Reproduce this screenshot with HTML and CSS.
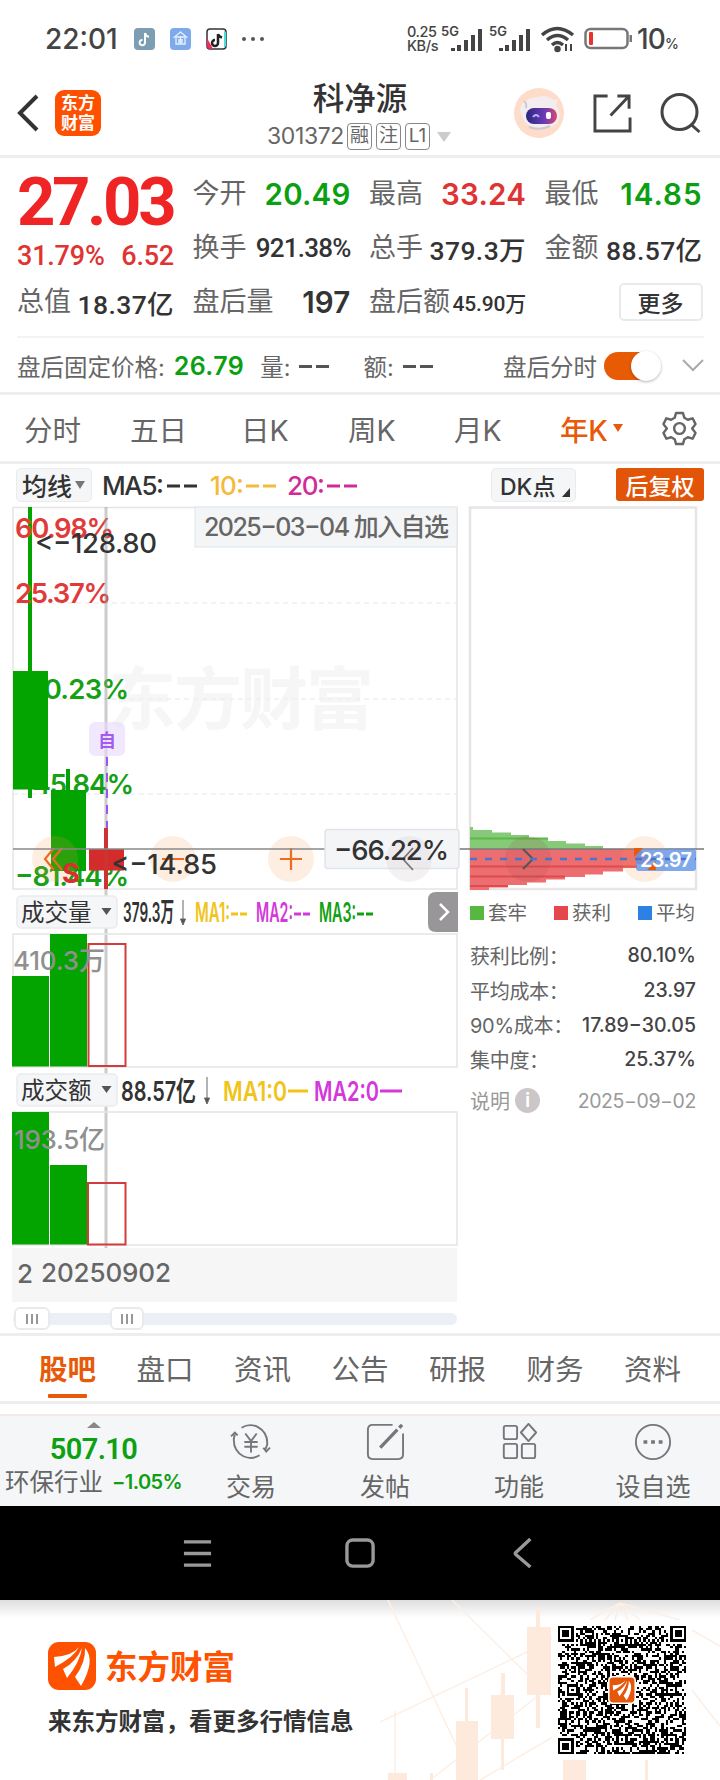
FILE: index.html
```html
<!DOCTYPE html>
<html lang="zh-CN">
<head>
  <meta charset="UTF-8">
  <meta name="viewport" content="width=device-width, initial-scale=1.0">
  <title>科净源 301372</title>
  <link rel="stylesheet" href="styles.css">
</head>
<body>
  <div class="status-bar">
    <span class="clock">22:01</span>
    <div class="app-icons">
      <svg class="app-icon" viewBox="0 0 22 22"><rect width="21" height="22" rx="4" fill="#7c9db2"/><path d="M11 5v9.5a2.7 2.7 0 1 1-2.5-2.6M11 5c.5 2.5 2 3.500 4 3.700" fill="none" stroke="#fff" stroke-width="2"/></svg>
      <svg class="app-icon" viewBox="0 0 22 22"><rect width="21" height="22" rx="4" fill="#7eaaea"/><path d="M10.500 4l6 5h-12zM6 10v6h9v-6M8 12h5M8 14h5M10.500 8v8" fill="none" stroke="#e8f2ff" stroke-width="1.300"/></svg>
      <svg class="app-icon" viewBox="0 0 22 22"><rect x="1" y="1" width="19" height="20" rx="3" fill="#fff" stroke="#333" stroke-width="1.500"/><path d="M1 10v8q0 3 3 3h3z" fill="#f3295b"/><path d="M20 4v14l-2 2V3z" fill="#45e0df"/><path d="M12 6v9a3 3 0 1 1-3-3M12 6c.5 2.500 2 3 4 3.500" fill="none" stroke="#222" stroke-width="2.500"/></svg>
      <span class="more-dots"><i></i><i></i><i></i></span>
    </div>
    <div class="net-speed"><span>0.25</span><span>KB/s</span></div>
    <svg class="signal" viewBox="0 0 48 30"><text x="0" y="12">5G</text><path d="M12 24v3M18 21v6M25 16v11M32 11v16M39 5v22" /></svg>
    <svg class="signal" viewBox="0 0 48 30"><text x="0" y="12">5G</text><path d="M12 24v3M18 21v6M25 16v11M32 11v16M39 5v22" /></svg>
    <svg class="wifi" viewBox="0 0 36 28" fill="none" stroke="#444" stroke-width="3.500"><path d="M2 10q15-13 31 0M7 15q10.500-9 21 0M12 20q5.500-5 11 0"/><circle cx="17.500" cy="24" r="1.500" fill="#444"/><path d="M26 26v-7M31 19v7" stroke-width="2"/></svg>
    <svg class="battery" viewBox="0 0 50 24"><rect x="1.500" y="2" width="42" height="19" rx="5" fill="#fff" stroke="#777" stroke-width="2.500"/><rect x="5" y="5" width="4" height="13" rx="1" fill="#e8332a"/><rect x="45.500" y="8" width="2.500" height="7" fill="#777"/></svg>
    <span class="battery-level">10<small>%</small></span>
  </div>

  <div class="header">
    <div class="header-left">
      <svg class="back" viewBox="0 0 24 38"><path d="M21 2L4 19l17 17" fill="none" stroke="#333" stroke-width="4"/></svg>
      <div class="brand">东方<br>财富</div>
    </div>
    <div class="header-title">
      <h1>科净源</h1>
      <div class="code"><span>301372</span><b>融</b><b>注</b><b>L1</b><i></i></div>
    </div>
    <div class="header-right">
      <svg class="robot" viewBox="0 0 50 50"><defs><linearGradient id="visor"><stop offset="0" stop-color="#2a2680"/><stop offset=".6" stop-color="#6c3bb5"/><stop offset="1" stop-color="#d94770"/></linearGradient></defs><circle cx="25" cy="25" r="25" fill="#fddcc9"/><path d="M7 26C4 15 13 10 24 9l5-1q6 0 11 4l4-1-2 6q6 8 2 17-5 6-15 7-17 1-22-15z" fill="#f3edf0"/><path d="M10 13q3 2 2 7M15 39q11 4 21-1" fill="none" stroke="#cfc7d2" stroke-width="2"/><rect x="12" y="20" width="31" height="16" rx="8" fill="url(#visor)"/><path d="M19 29q3-4 6 0" fill="none" stroke="#b9b1ff" stroke-width="2"/><rect x="32" y="24" width="5" height="7" rx="2" fill="#fff"/></svg>
      <svg class="share" viewBox="0 0 40 40"><path d="M15 2H2v36h36V24M25 2h12v13M36 3L18 22" fill="none" stroke="#444" stroke-width="3"/></svg>
      <svg class="search" viewBox="0 0 40 42"><circle cx="19" cy="20" r="17.500" fill="none" stroke="#444" stroke-width="3"/><path d="M30 32l9 8" stroke="#444" stroke-width="3"/></svg>
    </div>
  </div>

  <div class="quote">
    <div class="quote-grid">
      <div class="cell price">27.03</div>
      <div class="cell"><label>今开</label><span class="green big">20.49</span></div>
      <div class="cell"><label>最高</label><span class="red big">33.24</span></div>
      <div class="cell"><label>最低</label><span class="green big wide">14.85</span></div>
      <div class="cell change"><span>31.79%</span><span>6.52</span></div>
      <div class="cell"><label>换手</label><span class="mid tight">921.38%</span></div>
      <div class="cell"><label>总手</label><span class="mid">379.3万</span></div>
      <div class="cell"><label>金额</label><span class="mid">88.57亿</span></div>
      <div class="cell"><label>总值</label><span class="mid">18.37亿</span></div>
      <div class="cell"><label>盘后量</label><span class="big">197</span></div>
      <div class="cell"><label>盘后额</label><span class="small">45.90万</span></div>
      <div class="cell end"><button class="more-btn">更多</button></div>
    </div>
    <div class="after-hours">
      <span>盘后固定价格:</span><b class="green">26.79</b>
      <span>量:</span><b class="dashes"><i></i><i></i></b>
      <span>额:</span><b class="dashes"><i></i><i></i></b>
      <span class="after-label">盘后分时</span>
      <span class="toggle"></span>
      <svg class="chevron" viewBox="0 0 22 14"><path d="M1 2l10 10L21 2" fill="none" stroke="#aaa" stroke-width="2"/></svg>
    </div>
  </div>

  <div class="period-tabs">
    <span>分时</span><span>五日</span><span>日K</span><span>周K</span><span>月K</span>
    <span class="active">年K<i></i></span>
    <svg class="gear" viewBox="0 0 36 36" fill="none" stroke="#666" stroke-width="2.500"><path d="M14.500 2h7l1.500 5 3.500 2 5-1.500 3 6-3.500 4.500 3.500 4.500-3 6-5-1.500-3.500 2-1.500 5h-7l-1.500-5-3.500-2-5 1.500-3-6L5 18l-3.500-4.500 3-6 5 1.500 3.500-2z" stroke-linejoin="round"/><circle cx="18" cy="18" r="5.500"/></svg>
  </div>

  <div class="ma-bar">
    <button class="grey-btn">均线<i></i></button>
    <svg class="ma-values" viewBox="0 0 270 34">
      <text x="2" y="27" textLength="62" fill="#333">MA5:</text><path d="M67 18h13M84 18h13" stroke="#333"/>
      <text x="110" y="27" textLength="34" fill="#f5b93c">10:</text><path d="M146 18h13M163 18h13" stroke="#f5b93c"/>
      <text x="187" y="27" textLength="38" fill="#d02c98">20:</text><path d="M227 18h13M244 18h13" stroke="#d02c98"/>
    </svg>
    <button class="grey-btn dk">DK点<i></i></button>
    <button class="adjust-btn">后复权</button>
  </div>

  <div class="chart-area">
    <svg class="chart" viewBox="0 506 460 828">
      <!-- k-line panel -->
      <text class="watermark" x="108" y="724" textLength="266">东方财富</text>
      <path class="grid" d="M13 603H457M13 699H457M13 794H457"/>
      <rect class="frame" x="13" y="507.500" width="444" height="381.500"/>
      <g class="tick green-text">
        <text x="15" y="699" textLength="114">−10.23%</text>
        <text x="15" y="794" textLength="119">−45.84%</text>
        <text x="15" y="886" textLength="114">−81.44%</text>
      </g>
      <g fill="#03a300">
        <rect x="28" y="507" width="4" height="291"/><rect x="13" y="671" width="35" height="118.500"/>
        <rect x="66" y="769" width="4" height="22"/><rect x="51" y="790" width="35" height="81"/>
      </g>
      <g class="tick red-text">
        <text x="15" y="538" textLength="99">60.98%</text>
        <text x="15" y="603" textLength="96">25.37%</text>
      </g>
      <path d="M106 507V1250" stroke="#999" stroke-opacity=".5" stroke-width="3"/>
      <path d="M107 757V828" stroke="#9a57ee" stroke-width="2" stroke-dasharray="9 7"/>
      <rect x="89" y="849" width="35" height="21.500" fill="#d42b2b"/><path d="M106 828V889" stroke="#c33" stroke-width="4"/>
      <rect x="89" y="722" width="36" height="34" rx="6" fill="#ead9fc" fill-opacity=".6"/>
      <text x="98" y="747" class="self">自</text>
      <text x="35" y="553" class="tick dark" textLength="122">&lt;−128.80</text>
      <rect x="195" y="507" width="262" height="40" fill="#f4f5f7" stroke="#dde5ea"/>
      <text x="204" y="536" class="tick note" textLength="245">2025−03−04 加入自选</text>
      <circle cx="55" cy="859" r="23" class="tool"/><circle cx="173" cy="859" r="23" class="tool"/><circle cx="291" cy="859" r="23" class="tool"/>
      <path d="M54 848L45 859l9 11M62 848l-9 11 9 11M162 859h22M280 859h22M291 848v22" class="tool-line"/>
      <text x="62" y="883" class="sell">S</text>
      <text x="111" y="874" class="tick dark" textLength="106">&lt;−14.85</text>
      <path d="M13 849H460" stroke="#888" stroke-width="1.500"/>
      <rect x="325" y="829.500" width="134" height="39" rx="3" fill="#f4f5f7" stroke="#dfe5ea" stroke-width="1.500"/>
      <circle cx="409" cy="859" r="23" fill="#d9cfd3" fill-opacity=".3"/>
      <path d="M413 848l-10 11 10 11" fill="none" stroke="#777" stroke-width="1.800"/>
      <text x="334" y="860" class="tick dark" textLength="115">−66.22%</text>

      <!-- volume panel -->
      <rect class="btn" x="17" y="896" width="100" height="32" rx="4"/>
      <text x="21" y="921" class="label">成交量</text>
      <path d="M101.500 908h10l-5 7z" fill="#555"/>
      <g class="legend">
        <text x="123" y="922" textLength="51" lengthAdjust="spacingAndGlyphs" fill="#333">379.3万</text>
        <path d="M183 900v24M180.500 919l2.500 6 2.500-6z" stroke="#666" fill="#444"/>
        <g fill="#f0c419"><text x="195" y="922" textLength="35" lengthAdjust="spacingAndGlyphs">MA1:</text><path class="dash" d="M231 914h7M240 914h7" stroke="#f0c419"/></g>
        <g fill="#d338db"><text x="256" y="922" textLength="37" lengthAdjust="spacingAndGlyphs">MA2:</text><path class="dash" d="M294 914h7M303 914h7" stroke="#d338db"/></g>
        <g fill="#12a012"><text x="319" y="922" textLength="37" lengthAdjust="spacingAndGlyphs">MA3:</text><path class="dash" d="M357 914h7M366 914h7" stroke="#12a012"/></g>
      </g>
      <path d="M458 892v40h-22q-8 0-8-8v-24q0-8 8-8z" fill="#989698"/><path d="M440 904l8 8-8 8" fill="none" stroke="#fff" stroke-width="2.500"/>
      <rect class="frame" x="13" y="934" width="444" height="133"/>
      <path d="M12 976h37v90.500H12zM50 934h37v132.500H50z" fill="#03a300"/>
      <rect x="88.500" y="944" width="37" height="122" class="hollow"/>
      <text x="13" y="970" class="tick axis" textLength="92">410.3万</text>

      <!-- turnover panel -->
      <rect class="btn" x="17" y="1074" width="100" height="32" rx="4"/>
      <text x="21" y="1099" class="label">成交额</text>
      <path d="M101.500 1086h10l-5 7z" fill="#555"/>
      <g class="legend">
        <text x="121" y="1101" textLength="75" lengthAdjust="spacingAndGlyphs" fill="#333">88.57亿</text>
        <path d="M207 1077v26M204.500 1098l2.500 6 2.500-6z" stroke="#666" fill="#444"/>
        <g fill="#f0c419"><text x="223" y="1101" textLength="64" lengthAdjust="spacingAndGlyphs">MA1:0</text><path class="dash" d="M288 1091h20" stroke="#f0c419"/></g>
        <g fill="#d338db"><text x="314" y="1101" textLength="65" lengthAdjust="spacingAndGlyphs">MA2:0</text><path class="dash" d="M380 1091h22" stroke="#d338db"/></g>
      </g>
      <rect class="frame" x="13" y="1112" width="444" height="133"/>
      <path d="M12 1112h37v132.500H12zM50 1165h37v79.500H50z" fill="#03a300"/>
      <rect x="88" y="1183" width="37.500" height="61.500" class="hollow"/>
      <text x="14" y="1149" class="tick axis" textLength="91">193.5亿</text>

      <!-- date axis and range slider -->
      <rect x="12" y="1248" width="445" height="54" fill="#f6f6f7"/>
      <text x="17" y="1283" class="tick date">2</text>
      <text x="41" y="1282" class="tick date" textLength="130">20250902</text>
      <rect x="13" y="1313" width="444" height="12" rx="6" fill="#ecf0f6"/>
      <g class="thumb"><rect x="15" y="1308" width="34" height="21" rx="5"/><rect x="111" y="1308" width="32" height="21" rx="5"/></g>
      <path d="M27 1314v10M32 1314v10M37 1314v10M122 1314v10M127 1314v10M132 1314v10" stroke="#777" stroke-width="1.500"/>
    </svg>

    <div class="chips">
      <svg class="chips-chart" viewBox="460 506 244 386">
        <rect class="frame wide" x="470" y="507.500" width="226" height="381.500"/>
        <path d="M470 827h3v3h19v2.500h19v2.500h18v3h19v3h18v2.500h19v2.500h18v3H470z" fill="#86c978"/>
        <path d="M470 838.500h78" stroke="#5bb945" stroke-width="2"/>
        <path d="M470 849h168l18 10-10 5h-9v4h-14v3.500h-20v3h-18v2.500h-20v2.500h-19v3h-19v2.500h-19v2.500h-19v2.500h-19z" fill="#ed6e70"/>
        <path d="M470 866.500h167M470 876.500h95M470 886h38" stroke="#e04a4c" stroke-width="2"/>
        <circle cx="528" cy="859" r="23" fill="#a3454a" fill-opacity=".15"/>
        <path d="M460 849H704" stroke="#777" stroke-width="1.500"/>
        <circle cx="645" cy="859" r="23" class="tool"/>
        <path d="M523 849l10 10-10 10" fill="none" stroke="#555" stroke-width="2"/>
        <rect x="636" y="849" width="60" height="22" rx="3" fill="#5f93e6" fill-opacity=".8"/>
        <path d="M470 859H696" stroke="#4b73c9" stroke-width="2.500" stroke-dasharray="7 8"/>
        <path d="M634 848h9l-9 9zM656 870h-9l9-9z" fill="#e55a0b"/>
        <text x="640" y="867" textLength="52" class="avg">23.97</text>
      </svg>
      <div class="chips-legend">
        <span><i class="bg-green"></i>套牢</span><span><i class="bg-red"></i>获利</span><span><i class="bg-blue"></i>平均</span>
      </div>
      <div class="chips-row"><span>获利比例：</span><b>80.10%</b></div>
      <div class="chips-row"><span>平均成本：</span><b>23.97</b></div>
      <div class="chips-row"><span>90%成本：</span><b>17.89−30.05</b></div>
      <div class="chips-row"><span>集中度：</span><b>25.37%</b></div>
      <div class="chips-note"><span>说明</span><i>i</i><em>2025−09−02</em></div>
    </div>
  </div>

  <div class="info-tabs">
    <span class="active">股吧</span><span>盘口</span><span>资讯</span><span>公告</span><span>研报</span><span>财务</span><span>资料</span>
  </div>

  <div class="bottom-bar">
    <div class="industry">
      <i></i>
      <strong>507.10</strong>
      <div><span>环保行业</span><b>−1.05%</b></div>
    </div>
    <div class="action"><svg viewBox="0 0 44 40"><path d="M12 5q8-5 17-1 11 6 10 19l-2 5M31 34q-8 5-17 1Q3 29 4 16l1-4M1 14l4-4 3 3M35 26l3 4 4-4" /><path d="M16 11l6 8 6-8M15 20h14M15 25h14M22 19v12" /></svg>交易</div>
    <div class="action"><svg viewBox="0 0 44 40"><path d="M30 2H9q-5 0-5 5v26q0 5 5 5h27q5 0 5-5V11"/><path d="M17 26L35 7M37 5l3-3" stroke-width="3.500"/></svg>发帖</div>
    <div class="action"><svg viewBox="0 0 44 40"><rect x="6" y="3" width="14" height="14" rx="2"/><rect x="6" y="22" width="14" height="15" rx="2"/><rect x="25" y="22" width="14" height="15" rx="2"/><path d="M32 1l8 9-8 9-8-9z" stroke-linejoin="round"/></svg>功能</div>
    <div class="action"><svg viewBox="0 0 44 40"><circle cx="22" cy="20" r="18"/><path d="M12 20h4M20 20h4M28 20h4" stroke-width="3.500"/></svg>设自选</div>
  </div>

  <div class="system-nav">
    <svg viewBox="0 0 30 32"><path d="M1 4h28M1 16h28M1 28h28"/></svg>
    <svg viewBox="0 0 32 32"><rect x="2" y="2" width="27" height="27" rx="6"/></svg>
    <svg viewBox="0 0 30 32"><path d="M20 1L5 15q-1 1 0 2l15 13"/></svg>
  </div>

  <div class="footer">
    <svg class="footer-bg" viewBox="380 1600 340 180">
      <g fill="none" stroke="#fdefe4" stroke-width="1.500">
        <path d="M388 1600l82 175M452 1600l76 75M380 1722l160-76 20-14M430 1780l118-92M480 1780l110-65M590 1620l30-17 60 17M620 1603l-15 17M620 1603l-5 17M620 1603l8 17M620 1603l20 17M692 1630l28 16M692 1690l28 36M395 1711v69"/>
      </g>
      <g fill="#feeadd">
        <path d="M536 1608h4v19h11v68h-11v33h-4v-33h-9v-68h9zM501 1673h4v22h9v44h-10v31h-3v-31h-10v-44h10zM465 1688h3v33h10v59h-22v-59h9zM388 1773h19v7h-19zM430 1773h3v7h-3zM563 1760h23v20h-23zM645 1760h3v20h-3z"/>
      </g>
    </svg>
    <div class="footer-brand">
      <div class="footer-logo">
        <svg class="mark" viewBox="0 0 48 48"><rect width="48" height="48" rx="11" fill="#ff5200"/><g fill="#fff"><path d="M31 5Q26 15 7 25l-1-10q18-1 25-10z"/><path d="M34 6q-2 14-15 30l-4-9Q28 20 34 6z"/><path d="M37 6q11 12-4 38l-6-9q11-15 10-29z"/></g></svg>
        <span>东方财富</span>
      </div>
      <p>来东方财富，看更多行情信息</p>
    </div>
    <div class="qr">
      <svg id="qr-code" viewBox="0 0 57 57" shape-rendering="crispEdges"></svg>
      <svg class="qr-mark" viewBox="-3 -3 54 54"><rect x="-3" y="-3" width="54" height="54" rx="8" fill="#fff"/><rect width="48" height="48" rx="7" fill="#e5570a"/><g fill="#fff"><path d="M31 5Q26 15 7 25l-1-10q18-1 25-10z"/><path d="M34 6q-2 14-15 30l-4-9Q28 20 34 6z"/><path d="M37 6q11 12-4 38l-6-9q11-15 10-29z"/></g></svg>
    </div>
  </div>
  <script src="script.js"></script>
</body>
</html>
```
FILE: styles.css
```css
* {
  box-sizing: border-box;
  margin: 0;
  padding: 0;
}
body {
  width: 720px;
  height: 1780px;
  overflow: hidden;
  background: #fff;
  color: #333;
  font-family: Inter, "Noto Sans CJK SC", sans-serif;
}
i, em { font-style: normal; }
button { font-family: inherit; border: none; }
svg { display: block; flex: none; }
.green { color: #0b9f12; }
.red { color: #e03333; }

/* status bar */
.status-bar {
  height: 76px;
  padding: 2px 38px 0 45px;
  display: flex;
  align-items: center;
  color: #444;
}
.clock {
  width: 89px;
  font-size: 28px;
  font-weight: 500;
}
.app-icons {
  display: flex;
  align-items: center;
  gap: 14px;
  width: 273px;
}
.app-icon { width: 22px; height: 22px; }
.more-dots { display: flex; gap: 5px; }
.more-dots i { width: 4px; height: 4px; border-radius: 50%; background: #555; }
.net-speed {
  width: 34px;
  display: flex;
  flex-direction: column;
  font-size: 14.5px;
  font-weight: 500;
  line-height: 14px;
  letter-spacing: -0.4px;
}
.signal { width: 48px; height: 30px; }
.signal text { font-size: 13px; font-weight: 600; fill: #444; }
.signal path { fill: none; stroke: #444; stroke-width: 4; }
.wifi { width: 36px; height: 28px; margin-left: 3px; }
.battery { width: 50px; height: 24px; margin-left: 8px; }
.battery-level {
  margin-left: 3px;
  font-size: 28px;
  font-weight: 500;
  letter-spacing: -0.8px;
  white-space: nowrap;
}
.battery-level small { font-size: 14px; }

/* header */
.header {
  height: 82px;
  padding: 0 19px 0 16px;
  display: grid;
  grid-template-columns: 205px 1fr 205px;
  border-bottom: 3px solid #eceeef;
}
.header-left, .header-right { display: flex; align-items: center; }
.header-left { gap: 15px; padding-bottom: 5px; }
.back { width: 24px; height: 38px; }
.brand {
  width: 46px;
  height: 46px;
  border-radius: 9px;
  background: #ff5000;
  color: #fff;
  font: 700 17px/20px "Noto Sans CJK SC", sans-serif;
  text-align: center;
  padding-top: 2px;
}
.header-title {
  display: flex;
  flex-direction: column;
  align-items: center;
}
.header-title h1 {
  margin-left: 3px;
  font-size: 31.5px;
  line-height: 45px;
  font-weight: 500;
}
.code {
  display: flex;
  align-items: center;
  gap: 4px;
  margin-left: 1px;
  font-size: 23px;
  line-height: 31px;
  color: #666;
}
.code span { letter-spacing: -0.4px; margin-right: -1px; }
.code b {
  width: 25px;
  height: 27px;
  border: 1.5px solid #888;
  border-radius: 4px;
  font-size: 19px;
  line-height: 23px;
  font-weight: 400;
  text-align: center;
}
.code i {
  margin-left: 3px;
  border: 7px solid transparent;
  border-top: 10px solid #ccc;
  border-bottom: 0;
}
.header-right { justify-content: flex-end; gap: 28px; padding-bottom: 5px; }
.robot { width: 50px; height: 50px; margin-right: 1px; }
.share { width: 39px; height: 39px; }
.search { width: 41px; height: 42px; }

/* quote */
.quote {
  height: 237px;
  padding: 8px 16px 0 17px;
  border-bottom: 3px solid #eceeef;
}
.quote-grid {
  display: grid;
  grid-template-columns: 157px 158px 157px 158px;
  grid-template-rows: 55px 54px 54px;
  column-gap: 18.5px;
  height: 172px;
  border-bottom: 2px solid #f2f3f4;
}
.cell {
  display: flex;
  align-items: center;
  justify-content: space-between;
  white-space: nowrap;
}
.cell label { font-size: 27px; line-height: 34px; color: #666; }
.cell span { font-weight: 500; }
.cell .big { font-size: 29.5px; font-weight: 600; letter-spacing: 0.2px; }
.cell .big.wide { letter-spacing: 1px; }
.cell .mid { font-family: Roboto, "Noto Sans CJK SC", sans-serif; font-size: 26.5px; letter-spacing: 0.4px; }
.cell .mid.tight { font-size: 26px; letter-spacing: -0.8px; }
.cell .small { font-family: Roboto, "Noto Sans CJK SC", sans-serif; font-size: 21px; letter-spacing: -0.2px; }
.cell.price {
  font-family: Roboto, sans-serif;
  font-size: 67px;
  font-weight: 700;
  letter-spacing: -3.4px;
  color: #ef2525;
  padding-top: 17px;
}
.cell.change {
  color: #e03333;
  font-family: Roboto, sans-serif;
  font-size: 27px;
  padding-top: 16px;
  letter-spacing: -0.2px;
}
.cell.end { justify-content: flex-end; }
.more-btn {
  width: 84px;
  height: 38px;
  border: 2px solid #e8ebec;
  border-radius: 5px;
  background: #fff;
  color: #333;
  font-size: 23px;
  font-weight: 500;
}
.after-hours {
  height: 55px;
  display: flex;
  align-items: center;
  font-size: 23.5px;
  color: #666;
  white-space: nowrap;
}
.after-hours .green { font-size: 25px; font-weight: 600; margin: 0 16px 0 9px; letter-spacing: 0.4px; }
.dashes { display: inline-flex; gap: 4px; margin: 2px 34px 0 9px; }
.dashes i { width: 13px; height: 3px; background: #555; }
.after-label { margin-left: auto; }
.toggle {
  width: 56px;
  height: 28px;
  margin: 0 22px 0 7px;
  border-radius: 14px;
  background: #e85b05;
}
.toggle::after {
  content: '';
  display: block;
  width: 30px;
  height: 30px;
  margin: -1px 0 0 27px;
  border-radius: 50%;
  background: #fff;
  box-shadow: 0 1px 3px rgba(0, 0, 0, 0.3);
}
.chevron { width: 22px; height: 14px; margin-top: -2px; }

/* period tabs */
.period-tabs {
  height: 69px;
  padding: 0 23px 0 24px;
  display: grid;
  grid-template-columns: 106px 111px 107px 106px 106px 1fr 35px;
  align-items: center;
  border-bottom: 3px solid #eceeef;
  font-size: 28.5px;
  color: #666;
}
.period-tabs .active {
  display: flex;
  align-items: center;
  color: #e65a0a;
  font-weight: 500;
  letter-spacing: -0.3px;
}
.period-tabs .active i {
  margin-left: 5px;
  border: 5px solid transparent;
  border-top: 8px solid #e65a0a;
  border-bottom: 0;
}
.gear { width: 35px; height: 35px; }

/* moving average bar */
.ma-bar {
  height: 42px;
  padding: 4px 16px 0;
  display: flex;
  align-items: flex-start;
}
.grey-btn {
  display: flex;
  align-items: center;
  width: 76px;
  height: 34px;
  padding-left: 5px;
  background: #f5f6f8;
  border: 1.5px solid #e9ebef;
  border-radius: 5px;
  color: #333;
  font-size: 25px;
  font-weight: 500;
}
.grey-btn i {
  margin-left: 3px;
  border: 5px solid transparent;
  border-top: 8px solid #777;
  border-bottom: 0;
}
.ma-values {
  width: 270px;
  height: 34px;
  margin-left: 8px;
  font-size: 26px;
  font-weight: 500;
}
.ma-values path { stroke-width: 3; }
.grey-btn.dk { width: 85px; padding-left: 8px; margin-left: 121px; font-size: 23px; }
.grey-btn.dk i {
  align-self: flex-end;
  margin: 0 0 4px 7px;
  border: 0;
  border-left: 8px solid transparent;
  border-bottom: 9px solid #333;
}
.adjust-btn {
  width: 88px;
  height: 33px;
  margin-left: auto;
  background: #e25508;
  border-radius: 3px;
  color: #fff;
  font-size: 23px;
  font-weight: 500;
}

/* charts */
.chart-area {
  height: 830px;
  display: flex;
  border-bottom: 3px solid #eceeef;
}
.chart { width: 460px; height: 828px; }
.frame { fill: none; stroke: #e8e3e5; stroke-width: 1.5; }
.frame.wide { stroke-width: 2.5; }
.grid { fill: none; stroke: #efefef; stroke-width: 1.5; stroke-dasharray: 5 4; }
.watermark { font-size: 68px; font-weight: 700; fill: #f6f6f6; }
.tick { font-size: 27.5px; font-weight: 500; }
.green-text { fill: #15a015; font-weight: 600; }
.red-text { fill: #e03b3b; font-weight: 600; }
.dark { fill: #333; }
.note { font-size: 25px; fill: #666; }
.axis { font-size: 26px; font-weight: 500; fill: #909090; }
.date { font-size: 26px; fill: #666; }
.self { font-size: 18px; font-weight: 700; fill: #a45cf0; }
.sell { font-size: 27px; font-weight: 700; fill: #dc2e2e; }
.tool { fill: #fa9b50; fill-opacity: 0.17; }
.tool-line { fill: none; stroke: #ee6b1f; stroke-width: 2.2; }
.btn { fill: #f5f6f8; stroke: #e9ebef; stroke-width: 1.5; }
.label { font-size: 23.5px; fill: #333; }
.legend { font-size: 27px; font-weight: 600; }
.legend .dash { fill: none; stroke-width: 3; }
.hollow { fill: none; stroke: #d23c3c; stroke-width: 2; }
.thumb rect { fill: #fff; stroke: #e8ebee; stroke-width: 2; }

.chips { width: 244px; color: #666; font-size: 20px; }
.chips-chart { width: 244px; height: 386px; }
.avg { font-size: 20px; font-weight: 600; fill: #fff; }
.chips-legend {
  height: 38px;
  margin: 0 9px 0 10px;
  display: flex;
  align-items: center;
  justify-content: space-between;
  font-size: 19.5px;
}
.chips-legend i {
  display: inline-block;
  width: 14px;
  height: 14px;
  margin-right: 4px;
}
.bg-green { background: #55b840; }
.bg-red { background: #e5484b; }
.bg-blue { background: #2d80e4; }
.chips-legend + .chips-row { margin-top: 8px; }
.chips-row {
  height: 34.7px;
  margin: 0 8px 0 10px;
  display: flex;
  align-items: center;
  justify-content: space-between;
  white-space: nowrap;
}
.chips-row span { letter-spacing: -0.3px; }
.chips-row b { color: #444; font-size: 19.5px; font-weight: 500; letter-spacing: 0; }
.chips-note {
  height: 44px;
  margin: 2px 8px 0 10px;
  display: flex;
  align-items: center;
  color: #999;
}
.chips-note i {
  width: 25px;
  height: 25px;
  margin-left: 5px;
  border-radius: 50%;
  background: #cbc6c8;
  color: #fff;
  font-weight: 600;
  line-height: 25px;
  text-align: center;
}
.chips-note em { margin-left: auto; font-size: 19.5px; letter-spacing: -0.4px; }

/* info tabs */
.info-tabs {
  height: 68px;
  padding: 0 39px 0 39px;
  display: flex;
  justify-content: space-between;
  border-bottom: 3px solid #eceeef;
  font-size: 28.5px;
  line-height: 68px;
  color: #666;
}
.info-tabs .active { color: #e65a0a; font-weight: 700; }
.info-tabs .active::after {
  content: '';
  display: block;
  width: 39px;
  height: 4px;
  margin: -10px auto 0;
  border-radius: 1px;
  background: #e65a0a;
}

/* bottom bar */
.bottom-bar {
  height: 92px;
  margin-top: 10px;
  display: flex;
  background: #f5f6f8;
  border-top: 2px solid #f3e9e9;
  color: #666;
}
.industry {
  width: 184px;
  padding-left: 3px;
  display: flex;
  flex-direction: column;
  align-items: center;
  white-space: nowrap;
}
.industry i {
  margin-top: 6px;
  border: 7px solid transparent;
  border-top: 0;
  border-bottom: 6px solid #888;
}
.industry strong {
  margin-top: 4px;
  font-family: Roboto, sans-serif;
  font-size: 29px;
  line-height: 34px;
  font-weight: 600;
  letter-spacing: -0.6px;
  color: #0ca012;
}
.industry div { display: flex; align-items: center; gap: 9px; line-height: 32px; }
.industry span { font-size: 24.5px; }
.industry b { font-size: 20px; font-weight: 600; letter-spacing: -0.6px; color: #0ca012; }
.action {
  width: 134px;
  display: flex;
  flex-direction: column;
  align-items: center;
  padding-top: 7px;
  font-size: 25px;
  line-height: 53px;
}
.action svg {
  width: 42px;
  height: 38px;
  fill: none;
  stroke: #74777b;
  stroke-width: 2;
}

.system-nav {
  height: 94px;
  padding: 1px 179px 0 182px;
  display: flex;
  align-items: center;
  justify-content: space-between;
  background: #000;
}
.system-nav svg {
  width: 31px;
  height: 31px;
  fill: none;
  stroke: #999;
  stroke-width: 3.5;
}
.system-nav svg:nth-child(2) { margin-right: 3px; }

/* footer */
.footer {
  position: relative;
  height: 180px;
  display: flex;
  justify-content: space-between;
  padding: 20px 29px 0 48px;
  background: linear-gradient(#dedede, #fff 18px);
}
.footer-bg {
  position: absolute;
  right: 0;
  top: 0;
  width: 340px;
  height: 180px;
}
.footer-brand { padding-top: 22px; }
.footer-logo { display: flex; align-items: center; gap: 9px; height: 48px; }
.mark { width: 48px; height: 48px; }
.footer-logo span {
  margin-top: -4px;
  color: #ff5200;
  font-size: 32.5px;
  font-weight: 700;
}
.footer-brand p {
  margin-top: 14px;
  color: #333;
  font-size: 23.5px;
  line-height: 36px;
  font-weight: 700;
}
.qr {
  position: relative;
  width: 139px;
  height: 140px;
  padding: 6px;
  background: #fff;
}
#qr-code { width: 128px; height: 128px; }
.qr-mark {
  position: absolute;
  left: 56px;
  top: 56px;
  width: 28px;
  height: 28px;
}
```
FILE: script.js
```js
// 57x57 code: finder and alignment squares, timing lines, then data modules
const size = 57;
const svg = document.getElementById('qr-code');
const marks = [[3, 3, 3], [53, 3, 3], [3, 53, 3]];
[[28, 6], [6, 28], [50, 28], [28, 50], [50, 50]].forEach(([x, y]) => marks.push([x, y, 2]));

let seed = 20250902;
function random() {
  seed = (seed * 1103515245 + 12345) % 2147483648;
  return seed / 2147483648;
}

function isDark(x, y) {
  const data = random() < 0.5;
  for (const [cx, cy, r] of marks) {
    const d = Math.max(Math.abs(x - cx), Math.abs(y - cy));
    if (d <= r) return r === 3 ? d !== 2 : d !== 1;
    if (r === 3 && d === 4) return false;
  }
  if (x === 6 || y === 6) return (x + y) % 2 === 0;
  return data;
}

let d = '';
for (let y = 0; y < size; y++) {
  for (let x = 0; x < size; x++) {
    if (isDark(x, y)) d += `M${x} ${y}h1v1h-1z`;
  }
}
const path = document.createElementNS('http://www.w3.org/2000/svg', 'path');
path.setAttribute('d', d);
svg.appendChild(path);
```
